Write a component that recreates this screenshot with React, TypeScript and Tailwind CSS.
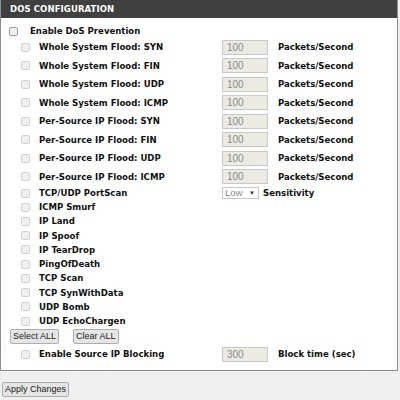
import React from "react";

const FLOODS = [
  "Whole System Flood: SYN",
  "Whole System Flood: FIN",
  "Whole System Flood: UDP",
  "Whole System Flood: ICMP",
  "Per-Source IP Flood: SYN",
  "Per-Source IP Flood: FIN",
  "Per-Source IP Flood: UDP",
  "Per-Source IP Flood: ICMP",
];

const ATTACKS = [
  "ICMP Smurf",
  "IP Land",
  "IP Spoof",
  "IP TearDrop",
  "PingOfDeath",
  "TCP Scan",
  "TCP SynWithData",
  "UDP Bomb",
  "UDP EchoChargen",
];

const bold =
  "font-['DejaVu_Sans_Condensed','Liberation_Sans',sans-serif] text-[9.5px] font-bold text-[#111]";
const ui = "font-['Liberation_Sans',sans-serif]";
const btn = `${ui} h-[15px] rounded-[2px] border border-[#adadad] bg-[#e5e5e5] px-[2px] text-[9px] leading-none text-[#222]`;

function Box({ disabled }: { disabled?: boolean }) {
  return (
    <span
      className={
        "inline-block h-[9px] w-[9px] shrink-0 rounded-[2px] border " +
        (disabled ? "border-[#d2d2d2] bg-[#f0f0f0]" : "border-[#9a9a9a] bg-[#f2f2f2]")
      }
    />
  );
}

function Num({ value }: { value: string }) {
  return (
    <span className={`${ui} flex h-[15px] w-[46px] items-center border border-[#c8c8c8] bg-[#ebebe4] pl-[4px] text-[10px] text-[#8a8a8a]`}>
      {value}
    </span>
  );
}

export default function App() {
  return (
    <div className="h-[400px] w-[400px] bg-[#f0f0f0]">
      <div className="w-[398px] border border-t-0 border-[#8c8c8c] bg-white">
        <div className="flex h-[18px] items-center bg-[#404040] pl-[9px] font-['DejaVu_Sans',sans-serif] text-[8.5px] font-bold tracking-[0.1px] text-white">
          DOS CONFIGURATION
        </div>
        <div className="pt-[6px] pb-[6px]">
          <div className="flex h-[14px] items-center pl-[8px]">
            <Box />
            <span className={`${bold} ml-[12px]`}>Enable DoS Prevention</span>
          </div>
          {FLOODS.map((f) => (
            <div key={f} className="flex h-[18.5px] items-center pl-[20px]">
              <Box disabled />
              <span className={`${bold} ml-[9px] w-[183px]`}>{f}</span>
              <Num value="100" />
              <span className={`${bold} ml-[10px]`}>Packets/Second</span>
            </div>
          ))}
          <div className="flex h-[14px] items-center pl-[20px]">
            <Box disabled />
            <span className={`${bold} ml-[9px] w-[183px]`}>TCP/UDP PortScan</span>
            <span className={`${ui} flex h-[12px] w-[37px] items-center justify-between border border-[#c8c8c8] bg-white pl-[2px] pr-[3px] text-[9.5px] text-[#8a8a8a]`}>
              Low
              <span className="text-[6px] text-[#333]">▼</span>
            </span>
            <span className={`${bold} ml-[4px]`}>Sensitivity</span>
          </div>
          {ATTACKS.map((a) => (
            <div key={a} className="flex h-[14.25px] items-center pl-[20px]">
              <Box disabled />
              <span className={`${bold} ml-[9px]`}>{a}</span>
            </div>
          ))}
          <div className="flex h-[16px] items-center gap-[14px] pl-[9px]">
            <button className={btn}>Select ALL</button>
            <button className={btn}>Clear ALL</button>
          </div>
          <div className="flex h-[20px] items-center pl-[20px]">
            <Box disabled />
            <span className={`${bold} ml-[9px] w-[183px]`}>Enable Source IP Blocking</span>
            <Num value="300" />
            <span className={`${bold} ml-[10px]`}>Block time (sec)</span>
          </div>
        </div>
      </div>
      <div className="flex pl-[2px] pt-[11px]">
        <button className={btn}>Apply Changes</button>
      </div>
    </div>
  );
}
